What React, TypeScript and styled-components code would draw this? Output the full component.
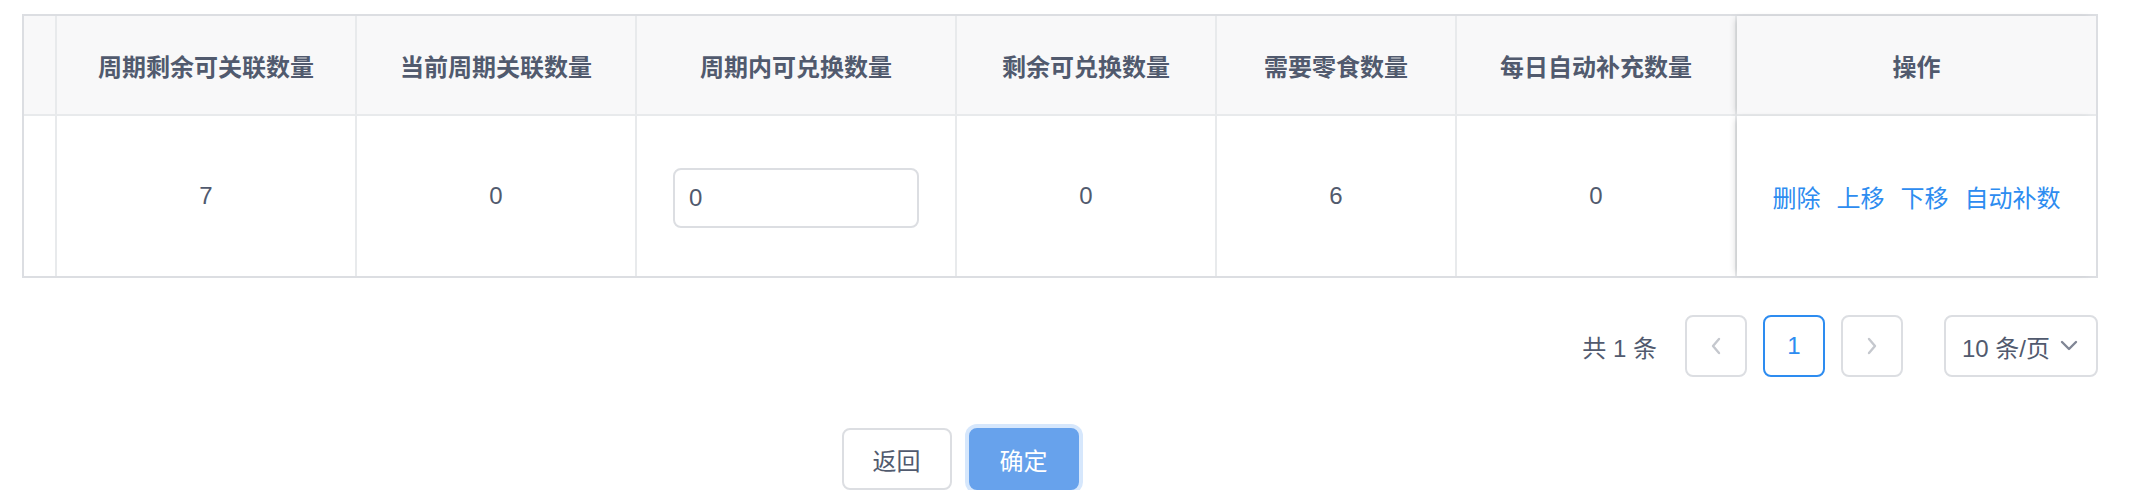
import React, { FC } from 'react'
import styled, { createGlobalStyle, css } from 'styled-components'

const GlobalStyle = createGlobalStyle`
  body {
    margin: 0;
    background: #fff;
    font-family: 'Liberation Sans', 'Noto Sans CJK SC', sans-serif;
    color: #515a6e;
  }
`

const Page = styled.div`
  padding: 14px 0 0 22px;
  width: 2076px;
`

const Table = styled.div`
  display: grid;
  grid-template-columns: 33px 300px 280px 320px 260px 240px 280px 359px;
  border: 2px solid #dcdee2;
  width: 2076px;
  box-sizing: border-box;
`

const cellBase = css`
  display: flex;
  align-items: center;
  justify-content: center;
  box-sizing: border-box;
  font-size: 24px;
  color: #515a6e;
`

const HeadCell = styled.div<{ $fixed?: boolean; $last?: boolean }>`
  ${cellBase};
  height: 100px;
  background: #f8f8f9;
  font-weight: 700;
  border-bottom: 2px solid #e8eaec;
  border-right: ${(p) => (p.$last ? 'none' : '2px solid #e8eaec')};
  ${(p) => p.$fixed && 'box-shadow: -4px 0 7px -3px rgba(0, 0, 0, 0.18);'}
`

const BodyCell = styled.div<{ $fixed?: boolean; $last?: boolean; $padded?: boolean }>`
  ${cellBase};
  height: 160px;
  background: #fff;
  border-right: ${(p) => (p.$last ? 'none' : '2px solid #e8eaec')};
  padding: ${(p) => (p.$padded ? '0 36px' : '0')};
  ${(p) => p.$fixed && 'box-shadow: -4px 0 7px -3px rgba(0, 0, 0, 0.18);'}
`

const NumberInput = styled.input`
  width: 100%;
  height: 60px;
  margin-top: 4px;
  box-sizing: border-box;
  border: 2px solid #dcdee2;
  border-radius: 8px;
  padding: 0 14px;
  font-family: 'Liberation Sans', 'Noto Sans CJK SC', sans-serif;
  font-size: 24px;
  color: #515a6e;
  outline: none;
`

const Actions = styled.div`
  display: flex;
  gap: 16px;
`

const ActionLink = styled.a`
  color: #2d8cf0;
  font-size: 24px;
  cursor: pointer;
`

const Pager = styled.div`
  display: flex;
  align-items: center;
  justify-content: flex-end;
  margin-top: 37px;
  height: 62px;
`

const Total = styled.span`
  font-size: 24px;
  color: #515a6e;
  margin-right: 28px;
  white-space: pre;
`

const PageItem = styled.div<{ $active?: boolean }>`
  width: 62px;
  height: 62px;
  box-sizing: border-box;
  display: flex;
  align-items: center;
  justify-content: center;
  border: 2px solid ${(p) => (p.$active ? '#2d8cf0' : '#dcdee2')};
  border-radius: 8px;
  font-size: 24px;
  color: ${(p) => (p.$active ? '#2d8cf0' : '#c5c8ce')};
  margin-right: 16px;
`

const SizeSelect = styled.div`
  margin-left: 25px;
  width: 154px;
  height: 62px;
  box-sizing: border-box;
  border: 2px solid #dcdee2;
  border-radius: 8px;
  display: flex;
  align-items: center;
  padding-left: 16px;
  gap: 10px;
  font-size: 24px;
  color: #515a6e;
`

const Footer = styled.div`
  width: 1920px;
  margin-left: -22px;
  margin-top: 51px;
  display: flex;
  justify-content: center;
  gap: 17px;
`

const Button = styled.button<{ $primary?: boolean }>`
  width: 110px;
  height: 62px;
  box-sizing: border-box;
  border-radius: 8px;
  font-family: 'Liberation Sans', 'Noto Sans CJK SC', sans-serif;
  font-size: 24px;
  cursor: pointer;
  ${(p) =>
    p.$primary
      ? css`
          background: #67a2ec;
          border: 2px solid #67a2ec;
          color: #fff;
          box-shadow: 0 0 0 4px #d6e7fc;
        `
      : css`
          background: #fff;
          border: 2px solid #dcdee2;
          color: #515a6e;
        `}
`

const Chevron: FC<{ dir: 'left' | 'right' | 'down'; color: string }> = ({ dir, color }) => {
  const points = dir === 'left' ? '11,3 5,10 11,17' : dir === 'right' ? '5,3 11,10 5,17' : '2,6 9,13 16,6'
  const w = dir === 'down' ? 18 : 16
  return (
    <svg width={w} height={20} viewBox={`0 0 ${w} 20`} fill="none">
      <polyline points={points} stroke={color} strokeWidth={2.4} strokeLinecap="round" strokeLinejoin="round" />
    </svg>
  )
}

const headers = ['周期剩余可关联数量', '当前周期关联数量', '周期内可兑换数量', '剩余可兑换数量', '需要零食数量', '每日自动补充数量']

const App: FC = () => {
  return (
    <Page>
      <GlobalStyle />
      <Table>
        <HeadCell />
        {headers.map((h) => (
          <HeadCell key={h}>{h}</HeadCell>
        ))}
        <HeadCell $fixed $last>
          操作
        </HeadCell>

        <BodyCell />
        <BodyCell>7</BodyCell>
        <BodyCell>0</BodyCell>
        <BodyCell $padded>
          <NumberInput defaultValue="0" />
        </BodyCell>
        <BodyCell>0</BodyCell>
        <BodyCell>6</BodyCell>
        <BodyCell>0</BodyCell>
        <BodyCell $fixed $last>
          <Actions>
            <ActionLink>删除</ActionLink>
            <ActionLink>上移</ActionLink>
            <ActionLink>下移</ActionLink>
            <ActionLink>自动补数</ActionLink>
          </Actions>
        </BodyCell>
      </Table>

      <Pager>
        <Total>共 1 条</Total>
        <PageItem>
          <Chevron dir="left" color="#c5c8ce" />
        </PageItem>
        <PageItem $active>1</PageItem>
        <PageItem>
          <Chevron dir="right" color="#c5c8ce" />
        </PageItem>
        <SizeSelect>
          10 条/页
          <Chevron dir="down" color="#808695" />
        </SizeSelect>
      </Pager>

      <Footer>
        <Button>返回</Button>
        <Button $primary>确定</Button>
      </Footer>
    </Page>
  )
}

export default App
